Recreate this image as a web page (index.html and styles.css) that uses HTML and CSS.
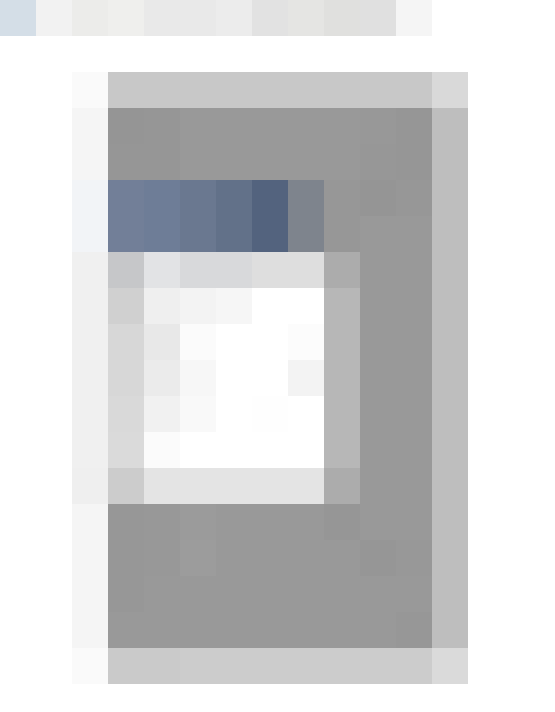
FILE: index.html
```html
<!DOCTYPE html>
<html>
<head>
<meta charset="utf-8">
<link rel="stylesheet" href="styles.css">
</head>
<body>
<div class="strip">
  <div class="px sky"></div><div class="px f2"></div><div class="px ecw"></div><div class="px efw"></div><div class="px e9"></div><div class="px e9"></div><div class="px ec"></div><div class="px e2"></div><div class="px e5w"></div><div class="px e0w"></div><div class="px e0"></div><div class="px f5"></div>
</div>
<div class="frame">
  <div class="px fa"></div><div class="px c8"></div><div class="px c8"></div><div class="px c8"></div><div class="px c8"></div><div class="px c8"></div><div class="px c8"></div><div class="px c8"></div><div class="px c8"></div><div class="px c8"></div><div class="px d9"></div>

  <div class="px f5"></div><div class="px g95"></div><div class="px g96"></div><div class="px g99"></div><div class="px g99"></div><div class="px g99"></div><div class="px g99"></div><div class="px g99"></div><div class="px g98"></div><div class="px g96"></div><div class="px be"></div>

  <div class="px f5"></div><div class="px g96"></div><div class="px g96"></div><div class="px g99"></div><div class="px g99"></div><div class="px g99"></div><div class="px g99"></div><div class="px g99"></div><div class="px g97"></div><div class="px g96"></div><div class="px be"></div>

  <div class="px b1"></div><div class="px b2"></div><div class="px b3"></div><div class="px b4"></div><div class="px b5"></div><div class="px b6"></div><div class="px b7"></div><div class="px g97"></div><div class="px g95"></div><div class="px g97"></div><div class="px be"></div>

  <div class="px b1"></div><div class="px b2"></div><div class="px b3"></div><div class="px b4"></div><div class="px b5"></div><div class="px b6"></div><div class="px b7"></div><div class="px g97"></div><div class="px g99"></div><div class="px g99"></div><div class="px be"></div>

  <div class="px f0"></div><div class="px c6"></div><div class="px e2b"></div><div class="px d8"></div><div class="px d8"></div><div class="px de"></div><div class="px de"></div><div class="px ac"></div><div class="px g99"></div><div class="px g99"></div><div class="px be"></div>

  <div class="px f0"></div><div class="px d0"></div><div class="px ef"></div><div class="px f3"></div><div class="px f6"></div><div class="px ff"></div><div class="px ff"></div><div class="px b7g"></div><div class="px g99"></div><div class="px g99"></div><div class="px be"></div>

  <div class="px f0"></div><div class="px d7"></div><div class="px e8"></div><div class="px fb"></div><div class="px ff"></div><div class="px ff"></div><div class="px fc"></div><div class="px b7g"></div><div class="px g99"></div><div class="px g99"></div><div class="px be"></div>

  <div class="px f0"></div><div class="px d7"></div><div class="px eb"></div><div class="px f7"></div><div class="px ff"></div><div class="px ff"></div><div class="px f3"></div><div class="px b7g"></div><div class="px g99"></div><div class="px g99"></div><div class="px be"></div>

  <div class="px f0"></div><div class="px d9"></div><div class="px f1"></div><div class="px f9"></div><div class="px ff"></div><div class="px fe"></div><div class="px ff"></div><div class="px b7g"></div><div class="px g99"></div><div class="px g99"></div><div class="px be"></div>

  <div class="px f0"></div><div class="px da"></div><div class="px fb"></div><div class="px ff"></div><div class="px ff"></div><div class="px ff"></div><div class="px ff"></div><div class="px b7g"></div><div class="px g99"></div><div class="px g99"></div><div class="px be"></div>

  <div class="px ef"></div><div class="px cc"></div><div class="px e4"></div><div class="px e4"></div><div class="px e4"></div><div class="px e4"></div><div class="px e4"></div><div class="px ac"></div><div class="px g99"></div><div class="px g99"></div><div class="px be"></div>

  <div class="px f5"></div><div class="px g97"></div><div class="px g98"></div><div class="px g9b"></div><div class="px g99"></div><div class="px g99"></div><div class="px g99"></div><div class="px g96"></div><div class="px g99"></div><div class="px g99"></div><div class="px be"></div>

  <div class="px f5"></div><div class="px g97"></div><div class="px g98"></div><div class="px g9c"></div><div class="px g99"></div><div class="px g99"></div><div class="px g99"></div><div class="px g99"></div><div class="px g96"></div><div class="px g98"></div><div class="px be"></div>

  <div class="px f5"></div><div class="px g97"></div><div class="px g99"></div><div class="px g99"></div><div class="px g99"></div><div class="px g99"></div><div class="px g99"></div><div class="px g99"></div><div class="px g99"></div><div class="px g99"></div><div class="px be"></div>

  <div class="px f5"></div><div class="px g99"></div><div class="px g99"></div><div class="px g99"></div><div class="px g99"></div><div class="px g99"></div><div class="px g99"></div><div class="px g99"></div><div class="px g99"></div><div class="px g97"></div><div class="px be"></div>

  <div class="px fa"></div><div class="px ca"></div><div class="px ca"></div><div class="px cc"></div><div class="px cc"></div><div class="px cc"></div><div class="px cc"></div><div class="px cc"></div><div class="px cc"></div><div class="px cc"></div><div class="px da"></div>
</div>
</body>
</html>
```
FILE: styles.css
```css
html, body {
  margin: 0;
  padding: 0;
  background: #ffffff;
}
body {
  width: 555px;
  height: 712px;
  overflow: hidden;
}
.strip {
  display: flex;
  height: 36px;
}
.frame {
  display: grid;
  grid-template-columns: repeat(11, 36px);
  grid-auto-rows: 36px;
  margin: 36px 0 0 72px;
}
.px { width: 36px; height: 36px; }

.sky { background: #d4dee7; }
.f2 { background: #f2f2f2; }
.ecw { background: #ececea; }
.efw { background: #efefed; }
.e9 { background: #e9e9e9; }
.ec { background: #ececec; }
.e2 { background: #e2e2e2; }
.e5w { background: #e5e5e3; }
.e0w { background: #e0e0de; }
.e0 { background: #e0e0e0; }
.f5 { background: #f5f5f5; }

.fa { background: #fafafa; }
.c8 { background: #c8c8c8; }
.d9 { background: #d9d9d9; }
.da { background: #dadada; }
.be { background: #bebebe; }
.g95 { background: #959595; }
.g96 { background: #969696; }
.g97 { background: #979797; }
.g98 { background: #989898; }
.g99 { background: #999999; }
.g9b { background: #9b9b9b; }
.g9c { background: #9c9c9c; }

.b1 { background: #f2f4f7; }
.b2 { background: #727f98; }
.b3 { background: #6e7d97; }
.b4 { background: #6a7890; }
.b5 { background: #627189; }
.b6 { background: #53637e; }
.b7 { background: #7e848d; }

.f0 { background: #f0f0f0; }
.c6 { background: #c6c7c9; }
.e2b { background: #e2e3e5; }
.d8 { background: #d8d9db; }
.de { background: #dedede; }
.ac { background: #acacac; }
.d0 { background: #d0d0d0; }
.ef { background: #efefef; }
.f3 { background: #f3f3f3; }
.f6 { background: #f6f6f6; }
.ff { background: #ffffff; }
.b7g { background: #b7b7b7; }
.d7 { background: #d7d7d7; }
.e8 { background: #e8e8e8; }
.fb { background: #fbfbfb; }
.fc { background: #fcfcfc; }
.eb { background: #ebebeb; }
.f7 { background: #f7f7f7; }
.f1 { background: #f1f1f1; }
.f9 { background: #f9f9f9; }
.fe { background: #fefefe; }
.cc { background: #cccccc; }
.e4 { background: #e4e4e4; }
.ca { background: #cacaca; }
```
